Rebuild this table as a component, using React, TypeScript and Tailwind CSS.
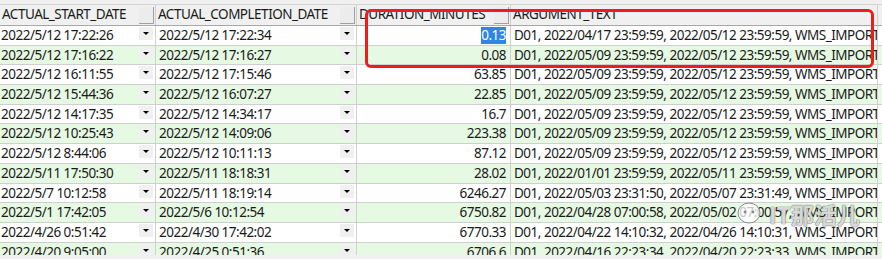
import React from "react";

const rows = [
  ["2022/5/12 17:22:26", "2022/5/12 17:22:34", "0.13", "D01, 2022/04/17 23:59:59, 2022/05/12 23:59:59, WMS_IMPORT_ORDER"],
  ["2022/5/12 17:16:22", "2022/5/12 17:16:27", "0.08", "D01, 2022/05/09 23:59:59, 2022/05/12 23:59:59, WMS_IMPORT_ORDER"],
  ["2022/5/12 16:11:55", "2022/5/12 17:15:46", "63.85", "D01, 2022/05/09 23:59:59, 2022/05/12 23:59:59, WMS_IMPORT_ORDER"],
  ["2022/5/12 15:44:36", "2022/5/12 16:07:27", "22.85", "D01, 2022/05/09 23:59:59, 2022/05/12 23:59:59, WMS_IMPORT_ORDER"],
  ["2022/5/12 14:17:35", "2022/5/12 14:34:17", "16.7", "D01, 2022/05/09 23:59:59, 2022/05/12 23:59:59, WMS_IMPORT_ORDER"],
  ["2022/5/12 10:25:43", "2022/5/12 14:09:06", "223.38", "D01, 2022/05/09 23:59:59, 2022/05/12 23:59:59, WMS_IMPORT_ORDER"],
  ["2022/5/12 8:44:06", "2022/5/12 10:11:13", "87.12", "D01, 2022/05/09 23:59:59, 2022/05/12 23:59:59, WMS_IMPORT_ORDER"],
  ["2022/5/11 17:50:30", "2022/5/11 18:18:31", "28.02", "D01, 2022/01/01 23:59:59, 2022/05/11 23:59:59, WMS_IMPORT_ORDER"],
  ["2022/5/7 10:12:58", "2022/5/11 18:19:14", "6246.27", "D01, 2022/05/03 23:31:50, 2022/05/07 23:31:49, WMS_IMPORT_ORDER"],
  ["2022/5/1 17:42:05", "2022/5/6 10:12:54", "6750.82", "D01, 2022/04/28 07:00:58, 2022/05/02 07:00:57, WMS_IMPORT_ORDER"],
  ["2022/4/26 0:51:42", "2022/4/30 17:42:02", "6770.33", "D01, 2022/04/22 14:10:32, 2022/04/26 14:10:31, WMS_IMPORT_ORDER"],
  ["2022/4/20 9:05:00", "2022/4/25 0:51:36", "6706.6", "D01, 2022/04/16 22:23:34, 2022/04/20 22:23:33, WMS_IMPORT_ORDER"],
];

const cols = "grid grid-cols-[156px_201px_154px_367px]";

function DropButton() {
  return (
    <div className="mt-[1px] flex h-[13px] w-[14px] shrink-0 justify-center bg-[#f0f0f0] pt-[5px]">
      <div className="h-0 w-0 border-x-[3px] border-t-[3px] border-x-transparent border-t-black" />
    </div>
  );
}

function HeaderButton() {
  return <div className="h-[17px] w-[15px] shrink-0 border-r border-b border-[#a0a0a0] bg-[#ececec]" />;
}

export default function App() {
  return (
    <div className="relative h-[259px] w-[882px] overflow-hidden bg-[#f0f0f0] font-['Noto_Sans',sans-serif] text-[13.5px] tracking-[-0.5px] text-[#1a1a1a]">
      <div className="h-[5px] border-b border-[#d4d4d4]" />

      <div className={`${cols} h-[21px] border-b border-[#a8a8a8] bg-[#f0f0f0]`}>
        {["ACTUAL_START_DATE", "ACTUAL_COMPLETION_DATE", "DURATION_MINUTES", "ARGUMENT_TEXT"].map((h, i) => (
          <div key={h} className="flex items-center justify-between overflow-hidden border-r border-[#d0d0d0] pl-[2px] pr-[1px] leading-none">
            <span className="whitespace-nowrap">{h}</span>
            {i < 3 && <HeaderButton />}
          </div>
        ))}
      </div>

      <div className="h-[229px] overflow-hidden bg-white">
        {rows.map(([start, done, mins, arg], i) => (
          <div key={start} className={`${cols} h-[19.7px] border-b border-[#cfcfcf] ${i % 2 ? "bg-[#e6f9e2]" : "bg-white"}`}>
            <div className="flex justify-between border-r border-[#d0d0d0] pl-[1px] pr-[2px] leading-[19px]">
              <span className="whitespace-nowrap">{start}</span>
              <DropButton />
            </div>
            <div className="flex justify-between border-r border-[#d0d0d0] pl-[3px] pr-[2px] leading-[19px]">
              <span className="whitespace-nowrap">{done}</span>
              <DropButton />
            </div>
            <div className="flex items-start justify-end border-r border-[#d0d0d0] pr-[4px] leading-[19px]">
              <span className={i === 0 ? "bg-[#2f86e6] leading-[17px] mt-[1px] text-white" : ""}>{mins}</span>
            </div>
            <div className="overflow-hidden whitespace-nowrap border-r border-[#d0d0d0] pl-[3px] leading-[19px]">{arg}</div>
          </div>
        ))}
      </div>
      <div className="h-[4px] bg-[#f0f0f0]" />

      <div className="absolute left-[365px] top-[9px] h-[59px] w-[509px] rounded-[6px] border-[3px] border-[#ee1c1c]" />

      <div className="absolute left-[736px] top-[197px] flex items-center gap-[5px]">
        <svg width="28" height="26" viewBox="0 0 28 26" fill="none">
          <ellipse cx="13" cy="12" rx="11" ry="10" fill="white" fillOpacity="0.75" stroke="#8a8a8a" strokeWidth="1" />
          <circle cx="9" cy="11" r="1.4" fill="#8a8a8a" />
          <circle cx="17" cy="11" r="1.4" fill="#8a8a8a" />
        </svg>
        <span className="font-['Noto_Sans_CJK_SC',sans-serif] text-[23px] font-bold tracking-normal text-white/75 [text-shadow:0_0_1px_#666,0_0_1px_#666]">
          IT那活儿
        </span>
      </div>
    </div>
  );
}
